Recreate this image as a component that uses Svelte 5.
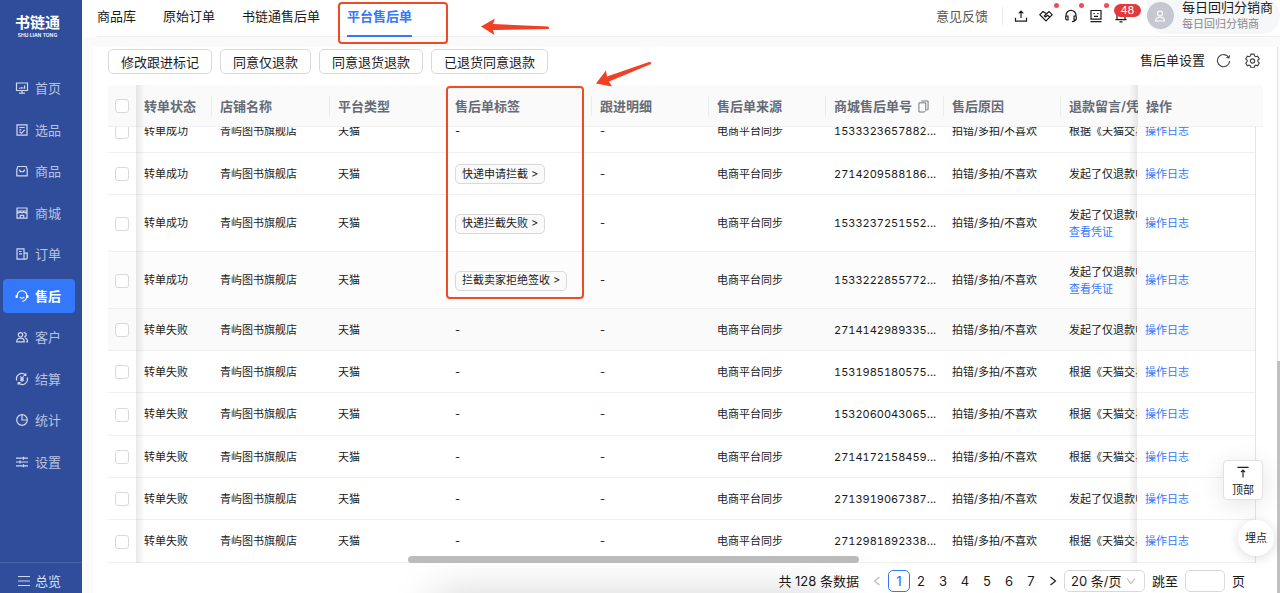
<script>
  const menu = ['首页', '选品', '商品', '商城', '订单', '售后', '客户', '结算', '统计', '设置'];
  const tabs = ['商品库', '原始订单', '书链通售后单', '平台售后单'];
  const actions = ['修改跟进标记', '同意仅退款', '同意退货退款', '已退货同意退款'];
  const heads = ['转单状态', '店铺名称', '平台类型', '售后单标签', '跟进明细', '售后单来源', '商城售后单号', '售后原因', '退款留言/凭证'];
  const rule = '根据《天猫交易规则》';
  const apply = '发起了仅退款申请';
  const rows = [
    { ok: true, tag: '', no: '1533323657882', msg: rule },
    { ok: true, tag: '快递申请拦截', no: '2714209588186', msg: apply },
    { ok: true, tag: '快递拦截失败', no: '1533237251552', msg: apply, proof: true },
    { ok: true, tag: '拦截卖家拒绝签收', no: '1533222855772', msg: apply, proof: true, shade: 'light' },
    { ok: false, tag: '', no: '2714142989335', msg: apply, shade: 'hover' },
    { ok: false, tag: '', no: '1531985180575', msg: rule },
    { ok: false, tag: '', no: '1532060043065', msg: rule },
    { ok: false, tag: '', no: '2714172158459', msg: rule },
    { ok: false, tag: '', no: '2713919067387', msg: apply },
    { ok: false, tag: '', no: '2712981892338', msg: rule }
  ];
  const pages = [1, 2, 3, 4, 5, 6, 7];
</script>

{#snippet cols(last)}
  <colgroup>
    <col style:width="28px" /><col style:width="76px" /><col style:width="118px" />
    <col style:width="117px" /><col style:width="145px" /><col style:width="117px" />
    <col style:width="117px" /><col style:width="118px" /><col style:width="117px" />
    <col /><col style:width="{last}px" />
  </colgroup>
{/snippet}

{#snippet menuIcon(name)}
  <svg class="micon" viewBox="0 0 14 14" aria-hidden="true">
    {#if name === '首页'}
      <path d="M1.500 2h11v7.500h-11zM7 9.500v2.500M4 12.200h6M4.500 7.800v-1M6.200 7.800V6M7.900 7.800v-1.500M9.600 7.800V4.500" />
    {:else if name === '选品'}
      <path d="M2 1.800h10v10.400H2zM4.300 4.500h5.400M4.300 6.800h2M4.500 8.800l2 1.500 3.200-3.500" />
    {:else if name === '商品'}
      <path d="M2.800 2.500h8.400l1 3v6.300H1.800V5.500zM4.500 5.500c0 3 5 3 5 0" />
    {:else if name === '商城'}
      <path d="M2 2h10v3H2zM2 5v7.200h10V5M2 5c0 2.400 3.300 2.400 3.300 0 0 2.400 3.400 2.400 3.400 0 0 2.400 3.300 2.400 3.300 0M5.300 12V9.300h3.400V12" />
    {:else if name === '订单'}
      <path d="M2 1.800h7v10.400H2zM9 6.200h3.200v4.600c0 .9-.6 1.400-1.400 1.400H9M4 4.500h2.500M4 6.800h3" />
    {:else if name === '售后'}
      <path d="M2.300 7.500A4.800 4.800 0 1 1 11.700 7.500C11.300 10.300 10 12 7.300 12.300M4.800 8c1 1.600 3.400 1.600 4.400 0" />
      <path class="fat" d="M1.600 6.300v2.700M12.400 6.300v2.700" />
    {:else if name === '客户'}
      <circle cx="5.500" cy="4.800" r="2.200" /><path d="M1.700 11.800c0-5 7.600-5 7.600 0zM8.600 2.800a2 2 0 1 1 .6 3.900M9.800 8c1.800.2 2.700 1.600 2.700 3.800h-1.300" />
    {:else if name === '结算'}
      <path d="M1.800 8.500A5.300 5.300 0 0 1 10.500 3M12.200 5.500A5.300 5.300 0 0 1 3.500 11M10.800 1.200V3.500H8.500M3.200 12.800v-2.300h2.300M5.300 4.300L7 6.300l1.700-2M7 6.300v3.500M5.200 6.800h3.600M5.200 8.300h3.600" />
    {:else if name === '统计'}
      <circle cx="7" cy="7" r="5.300" /><path d="M7 1.700V7h5.300" />
    {:else}
      <path d="M1 3.200h12M1 7h12M1 10.800h12M8.500 1.700v3M5 5.500v3M8.500 9.300v3" />
    {/if}
  </svg>
{/snippet}

<div class="app">
  <aside class="side">
    <div class="logo"><strong>书链通</strong><small>SHU LIAN TONG</small></div>
    <ul>
      {#each menu as m}
        <li><a href="#{m}" class:on={m === '售后'}>{@render menuIcon(m)}<span>{m}</span></a></li>
      {/each}
    </ul>
    <a class="overview" href="#overview">
      <svg class="micon" viewBox="0 0 14 14" aria-hidden="true"><path d="M1 2.500h12M1 7h12M1 11.500h12" /></svg><span>总览</span>
    </a>
  </aside>

  <div class="page">
    <header class="top">
      <nav>
        {#each tabs as t, i}
          <a href="#tab{i}" class:cur={i === 3}>{t}</a>
        {/each}
      </nav>
      <div class="tools">
        <a class="feedback" href="#feedback">意见反馈</a>
        <button class="ib" aria-label="上传"><svg viewBox="0 0 14 14"><path d="M7 9V2.200M4.700 4.300L7 2l2.300 2.300M1.500 8.800v3.400h11V8.800" /></svg></button>
        <button class="ib dot" aria-label="合作"><svg viewBox="0 0 14 14"><path d="M4 2.500L.8 5.700 7 12l6.200-6.300L10 2.500 7.600 4.800 4 2.500zM7.600 4.800L5.300 7l1.200 1 2.200-1.800 2.200 2" /></svg></button>
        <button class="ib dot" aria-label="客服"><svg viewBox="0 0 14 14"><path d="M2 8V6.300a5 5 0 0 1 10 0V8M2 7h2v4H2.800L1.700 10V7.500zM12 7h-2v3.800h1.800l.5-.8V7.500M11.500 11c-.5 1.300-1.500 1.600-3.500 1.600" /></svg></button>
        <button class="ib dot" aria-label="助手"><svg viewBox="0 0 14 14"><path d="M2 1.500h10v8.700H2zM1.500 12.700h11M4.500 4.700h1.200M8.300 4.700h1.200M5 7.300h4" /></svg></button>
        <button class="ib" aria-label="通知"><svg viewBox="0 0 14 14"><path d="M3 10.500V6a4 4 0 0 1 8 0v4.500M1.500 10.700h11M5.500 12.800h3" /></svg><span class="badge">48</span></button>
        <div class="user">
          <span class="avatar"><svg viewBox="0 0 14 14"><circle cx="7" cy="4.500" r="2.500" /><path d="M2.500 12c0-5 9-5 9 0z" /></svg></span>
          <span class="names"><b>每日回归分销商</b><i>每日回归分销商</i></span>
        </div>
      </div>
    </header>

    <main class="panel">
      <div class="bar">
        {#each actions as a}<button class="act">{a}</button>{/each}
        <div class="right">
          <a href="#config">售后单设置</a>
          <button class="ib" aria-label="刷新"><svg viewBox="0 0 16 16"><path d="M13.700 5A6.500 6.500 0 1 0 14.500 8.500M14.500 2.500L13.800 5.300 11 4.800" /></svg></button>
          <button class="ib" aria-label="设置"><svg viewBox="0 0 16 16"><path d="M6.300 1.200h3.400l.5 2 1.300.8 2-.6 1.700 2.900-1.500 1.500v1.400l1.500 1.500-1.700 2.900-2-.6-1.300.8-.5 1.900H6.300l-.5-1.900-1.300-.8-2 .6-1.700-2.900 1.500-1.500V7.800L.8 6.300l1.700-2.900 2 .6 1.300-.8z" /><circle cx="8" cy="8.500" r="2.300" /></svg></button>
        </div>
      </div>

      <div class="grid">
        <table class="head">
          {@render cols(125)}
          <thead>
            <tr>
              <th class="pick"><input type="checkbox" aria-label="全选" /></th>
              {#each heads as h, i}
                <th class:sep={i < 8}>{h}{#if i === 6}<svg class="copy" viewBox="0 0 12 14" aria-hidden="true"><path d="M3.500 1h7.500v9.500H9.500M1 3h7.500v8.500l-1.500 1.500H1z" /></svg>{/if}</th>
              {/each}
              <th class="op">操作</th>
            </tr>
          </thead>
        </table>
        <div class="body">
          <table>
            {@render cols(118)}
            <tbody>
              {#each rows as r, i}
                <tr class={r.shade ?? ''} class:tall={r.proof}>
                  <td class="pick"><input type="checkbox" aria-label="选择第{i + 1}行" /></td>
                  <td>{r.ok ? '转单成功' : '转单失败'}</td>
                  <td>青屿图书旗舰店</td>
                  <td>天猫</td>
                  <td>{#if r.tag}<button class="tag">{r.tag} &gt;</button>{:else}-{/if}</td>
                  <td>-</td>
                  <td>电商平台同步</td>
                  <td><span class="num">{r.no}</span>...</td>
                  <td>拍错/多拍/不喜欢</td>
                  <td class="msg">{r.msg}{#if r.proof}<br /><a href="#proof{i}">查看凭证</a>{/if}</td>
                  <td class="op"><a href="#log{i}">操作日志</a></td>
                </tr>
              {/each}
            </tbody>
          </table>
        </div>
        <div class="hbar"></div>
      </div>

      <footer class="pager">
        <span class="total">共 128 条数据</span>
        <button class="arrow off" aria-label="上一页"><svg viewBox="0 0 8 10"><path d="M6.500 1L1.500 5l5 4" /></svg></button>
        {#each pages as p}<button class="pg" class:cur={p === 1}>{p}</button>{/each}
        <button class="arrow" aria-label="下一页"><svg viewBox="0 0 8 10"><path d="M1.500 1l5 4-5 4" /></svg></button>
        <span class="size">
          <select aria-label="每页条数"><option>20 条/页</option></select>
          <svg viewBox="0 0 10 8" aria-hidden="true"><path d="M1 1.500l4 5 4-5" /></svg>
        </span>
        <label for="jump">跳至</label><input id="jump" type="text" /><span>页</span>
      </footer>
    </main>
  </div>

  <button class="totop"><svg viewBox="0 0 14 14" aria-hidden="true"><path d="M1 1.500h12M7 12.500V4.500M4.800 6.500L7 4.300l2.200 2.200" /></svg>顶部</button>
  <button class="track">埋点</button>
  <div class="vtrack"></div>
  <div class="vbar"></div>
  <div class="glow"></div>

  <div class="mark tabmark"></div>
  <div class="mark colmark"></div>
  <svg class="pointer p1" viewBox="0 0 70 18" aria-hidden="true"><path d="M1 8.500L15 .5l-2 5.500 55 2.500c1.500.2 1.500 2.300 0 2.500L13 12l1.500 5z" /></svg>
  <svg class="pointer p2" viewBox="0 0 58 26" aria-hidden="true"><path d="M1 22.500L11 9.500l1 6L54 1c2-.5 3 1.500 1.500 2.300L14 20.500l3 5z" /></svg>
</div>

<style>
  :global(body) { background: #fafafa; }
  * { box-sizing: border-box; }
  .app {
    position: relative;
    display: flex;
    height: 100vh;
    overflow: hidden;
    font: 13px/18px Inter, "Noto Sans CJK SC", sans-serif;
    color: #1a1a1a;
  }
  a { color: inherit; text-decoration: none; }
  button, input, select { font: inherit; color: inherit; margin: 0; }
  button { padding: 0; border: 0; background: none; white-space: nowrap; }
  svg { fill: none; stroke: currentColor; stroke-width: 1.2; }

  .side { display: flex; flex-direction: column; flex: none; width: 82px; background: #304d9c; color: #b8c3e0; }
  .logo { display: flex; flex-direction: column; align-items: center; height: 71px; padding: 14px 7px 0 0; color: #fff; }
  .logo strong { font-size: 15px; line-height: 18px; }
  .logo small { font-size: 5px; line-height: 6px; font-weight: 600; }
  ul { flex: 1; margin: 0; padding: 0 7px 0 3px; list-style: none; }
  li { margin-bottom: 7px; }
  li:nth-child(odd) { margin-bottom: 8px; }
  li a { display: flex; align-items: center; gap: 6px; height: 34px; padding-left: 12px; border-radius: 4px; }
  li a.on { background: #3478fa; color: #fff; font-weight: 600; }
  .micon { width: 14px; height: 14px; stroke-width: 1.2; color: #d0d8ee; }
  .on .micon { color: #fff; }
  .fat { stroke-width: 2; }
  .overview { display: flex; align-items: center; gap: 4px; height: 31px; padding: 6px 0 0 17px; border-top: 1px solid #4a64aa; color: #dce2f2; }

  .page { display: flex; flex-direction: column; flex: 1; min-width: 0; border-left: 1px solid #fff; }
  .top { display: flex; justify-content: space-between; height: 37px; padding-left: 14px; background: linear-gradient(#eee, #eee) 14px 36px no-repeat, #fff; }
  nav { display: flex; gap: 27px; }
  nav a { height: 37px; line-height: 32px; border-bottom: 2px solid transparent; }
  nav a.cur { color: #3478fa; font-weight: 600; border-color: #3478fa; }
  .tools { display: flex; align-items: center; gap: 11px; height: 31px; }
  .feedback { padding-right: 14px; border-right: 1px solid #e8e8e8; color: #555; }
  .ib { position: relative; display: flex; width: 14px; height: 14px; }
  .ib svg { width: 100%; height: 100%; }
  .dot::after { content: ""; position: absolute; top: -6px; right: -6px; width: 5px; height: 5px; border-radius: 50%; background: #ee4f50; }
  .badge { position: absolute; top: -5px; left: 0; width: 27px; height: 13px; border-radius: 7px; background: #e03b3a; color: #fff; font-size: 11px; line-height: 13px; }
  .user { display: flex; align-items: center; gap: 8px; height: 36px; margin-left: 8px; padding-right: 7px; border-radius: 0 18px 18px 18px; background: #f6f7f9; }
  .avatar { display: flex; align-items: center; justify-content: center; width: 27px; height: 27px; border-radius: 50%; background: #c5c8d0; color: #fff; }
  .avatar svg { width: 14px; height: 14px; }
  .names { display: flex; flex-direction: column; }
  .names b { font-weight: 400; line-height: 18px; }
  .names i { font: 11px/17px Inter, "Noto Sans CJK SC", sans-serif; color: #888; }

  .panel { display: flex; flex-direction: column; flex: 1; min-height: 0; margin: 10px 3px 0 10px; padding: 2px 14px 0 15px; background: #fff; }
  .bar { display: flex; gap: 8px; height: 36px; }
  .act { height: 25px; padding: 0 12px; border: 1px solid #d9d9d9; border-radius: 5px; background: #fff; }
  .right { display: flex; align-items: center; gap: 11px; height: 22px; margin-left: auto; padding-right: 3px; }
  .right .ib { width: 15px; height: 15px; color: #444; }
  .right .ib + .ib { margin-left: 3px; }

  .grid { position: relative; }
  table { width: 100%; table-layout: fixed; border-collapse: separate; border-spacing: 0; }
  th, td { position: relative; padding: 0 0 0 8px; text-align: left; white-space: nowrap; border-bottom: 1px solid #f0f0f0; }
  th { height: 42px; background: #fafafa; color: #666b76; font-weight: 600; overflow: hidden; }
  .sep::before { content: ""; position: absolute; right: 0; top: 11px; width: 1px; height: 20px; background: #ebebeb; }
  td { height: 42px; padding-top: 1px; font-size: 11px; line-height: 17px; background: #fff; }
  tr:nth-child(3n + 1) td { height: 43px; }
  tr.tall td { height: 57px; }
  tr.light td { background: #fcfcfc; }
  tr.hover td { background: #fafafa; }
  .pick { padding-left: 7px; overflow: visible; z-index: 1; }
  .pick::after { content: ""; position: absolute; left: 100%; top: 0; bottom: -1px; width: 9px; background: linear-gradient(90deg, #00000016, #0000); }
  .op { overflow: visible; z-index: 1; }
  .op::after { content: ""; position: absolute; right: 100%; top: 0; bottom: -1px; width: 9px; background: linear-gradient(270deg, #00000016, #0000); }
  .num { font-variant-numeric: tabular-nums; }
  .msg { overflow: hidden; text-overflow: clip; }
  td a { color: #3478fa; }
  input[type="checkbox"] { display: block; appearance: none; width: 14px; height: 14px; border: 1px solid #d9d9d9; border-radius: 3px; background: #fff; }
  .copy { width: 11px; height: 13px; margin-left: 6px; vertical-align: -2px; stroke-width: 1; }
  .body { margin-right: 7px; overflow: hidden; border-right: 1px solid #e4e4e4; }
  .body table { margin-top: -17px; }
  .tag { height: 20px; padding: 0 6px; border: 1px solid #d9d9d9; border-radius: 5px; background: #fafafa; line-height: 17px; }
  .hbar { position: absolute; z-index: 2; left: 26%; bottom: 0; width: 39%; height: 7px; border-radius: 4px; background: #bbb; }

  .pager { display: flex; align-items: center; justify-content: flex-end; margin-top: 7px; padding-right: 18px; }
  .total { margin-right: 7px; }
  .arrow { display: flex; align-items: center; justify-content: center; width: 22px; height: 22px; }
  .arrow svg { width: 8px; height: 10px; }
  .off { color: #bbb; }
  .pg { width: 22px; height: 22px; border: 1px solid transparent; border-radius: 5px; }
  .pg.cur { border-color: #3478fa; color: #3478fa; font-weight: 500; background: #fff; }
  .size { position: relative; margin-right: 7px; }
  .size select { width: 81px; height: 22px; padding: 0 6px; appearance: none; border: 1px solid #d9d9d9; border-radius: 5px; background: #fff; }
  .size svg { position: absolute; right: 9px; top: 7px; width: 10px; height: 8px; color: #bbb; }
  #jump { width: 40px; height: 22px; margin: 0 7px; border: 1px solid #d9d9d9; border-radius: 5px; }

  .totop { position: absolute; z-index: 3; right: 17px; bottom: 93px; display: flex; flex-direction: column; align-items: center; gap: 2px; width: 40px; height: 40px; padding-top: 5px; border: 1px solid #e2e2e2; border-radius: 4px; background: #fff; box-shadow: 0 4px 24px #0000001c; font-size: 11px; }
  .totop svg { width: 14px; height: 14px; }
  .track { position: absolute; z-index: 3; right: 6px; bottom: 37px; width: 36px; height: 36px; border-radius: 50%; background: #fff; box-shadow: 0 2px 12px #00000024; font-size: 11px; }
  .vtrack { position: absolute; right: 2px; top: 47px; bottom: 0; width: 1px; background: #e2e2e2; }
  .vbar { position: absolute; right: 0; top: 361px; bottom: 0; width: 3px; background: #c1c1c1; }
  .glow { position: absolute; left: 34%; right: 35%; top: 100%; height: 40px; box-shadow: 0 4px 44px 2px #0000002e; pointer-events: none; }

  .mark { position: absolute; z-index: 4; border: 2px solid #f04a23; border-radius: 4px; pointer-events: none; }
  .tabmark { left: 338px; top: 2px; width: 110px; height: 42px; }
  .colmark { left: 446px; top: 86px; width: 138px; height: 213px; }
  .pointer { position: absolute; z-index: 4; fill: #f04026; stroke: none; }
  .p1 { left: 480px; top: 18px; width: 70px; height: 18px; }
  .p2 { left: 595px; top: 61px; width: 58px; height: 26px; }
</style>
